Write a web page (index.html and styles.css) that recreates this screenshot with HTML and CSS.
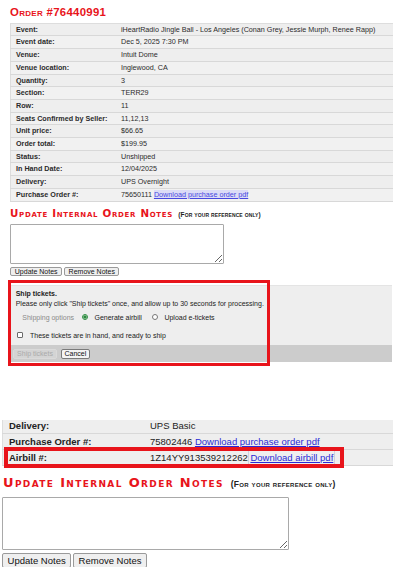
FILE: index.html
```html
<!DOCTYPE html>
<html lang="en">
<head>
    <meta charset="UTF-8">
    <meta name="viewport" content="width=device-width, initial-scale=1.0">
    <title>Order #76440991</title>
    <link rel="stylesheet" href="styles.css">
</head>
<body>
    <!-- zoomed-out view of the order page -->
    <section class="shot shot-small">
        <h2 class="order-title">Order #76440991</h2>
        <table class="details">
            <tbody>
                <tr><td class="label">Event:</td><td>iHeartRadio Jingle Ball - Los Angeles (Conan Grey, Jessie Murph, Renee Rapp)</td></tr>
                <tr><td class="label">Event date:</td><td>Dec 5, 2025 7:30 PM</td></tr>
                <tr><td class="label">Venue:</td><td>Intuit Dome</td></tr>
                <tr><td class="label">Venue location:</td><td>Inglewood, CA</td></tr>
                <tr><td class="label">Quantity:</td><td>3</td></tr>
                <tr><td class="label">Section:</td><td>TERR29</td></tr>
                <tr><td class="label">Row:</td><td>11</td></tr>
                <tr><td class="label">Seats Confirmed by Seller:</td><td>11,12,13</td></tr>
                <tr><td class="label">Unit price:</td><td>$66.65</td></tr>
                <tr><td class="label">Order total:</td><td>$199.95</td></tr>
                <tr><td class="label">Status:</td><td>Unshipped</td></tr>
                <tr><td class="label">In Hand Date:</td><td>12/04/2025</td></tr>
                <tr><td class="label">Delivery:</td><td>UPS Overnight</td></tr>
                <tr><td class="label">Purchase Order #:</td><td>75650111 <a class="visited" href="#">Download purchase order pdf</a></td></tr>
            </tbody>
        </table>

        <h3 class="notes-title">Update Internal Order Notes <small>(For your reference only)</small></h3>
        <textarea class="notes"></textarea>
        <div class="notes-actions">
            <button type="button">Update Notes</button>
            <button type="button">Remove Notes</button>
        </div>

        <div class="ship-wrap">
            <div class="ship-panel">
                <div class="ship-body">
                    <div class="ship-head">Ship tickets.</div>
                    <div class="ship-text">Please only click "Ship tickets" once, and allow up to 30 seconds for processing.</div>
                    <div class="ship-options">
                        <span class="opt-label">Shipping options</span>
                        <label class="opt"><input type="radio" name="ship" checked> Generate airbill</label>
                        <label class="opt"><input type="radio" name="ship"> Upload e-tickets</label>
                    </div>
                    <label class="ship-check"><input type="checkbox"> These tickets are in hand, and ready to ship</label>
                </div>
                <div class="ship-bar">
                    <button type="button" disabled>Ship tickets</button>
                    <button type="button">Cancel</button>
                </div>
            </div>
            <div class="callout callout-ship"></div>
        </div>
    </section>

    <!-- full size view after shipping -->
    <section class="shot shot-large">
        <div class="crop">
            <table class="details details-large">
                <tbody>
                    <tr><td class="label">Delivery:</td><td>UPS Basic</td></tr>
                    <tr><td class="label">Purchase Order #:</td><td>75802446 <a href="#">Download purchase order pdf</a></td></tr>
                    <tr><td class="label">Airbill #:</td><td>1Z14YY913539212262 <a class="focused" href="#">Download airbill pdf</a></td></tr>
                </tbody>
            </table>
            <div class="callout callout-airbill"></div>
        </div>

        <h3 class="notes-title">Update Internal Order Notes <small>(For your reference only)</small></h3>
        <textarea class="notes"></textarea>
        <div class="notes-actions">
            <button type="button">Update Notes</button>
            <button type="button">Remove Notes</button>
        </div>
    </section>
</body>
</html>
```

FILE: styles.css
```css
body {
    margin: 0;
    font-family: "Liberation Sans", Arial, sans-serif;
    color: #333;
    background: #fff;
    overflow: hidden;
}

a {
    color: #2a2ad6;
    text-decoration: underline;
}

.order-title {
    margin: 0;
    padding: 4.6px 0 0 10px;
    height: 14px;
    font-size: 11.4px;
    line-height: 14px;
    letter-spacing: 0.3px;
    font-variant: small-caps;
    font-weight: bold;
    color: #e8141b;
}

/* order details table */
.details {
    border-collapse: collapse;
    background: #eee;
}

.details td {
    padding: 0;
    border-bottom: 1px solid #d8d8d8;
    white-space: nowrap;
    vertical-align: middle;
}

.details tr:nth-child(even) td {
    background: #f1f1f1;
}

.details td.label {
    font-weight: bold;
}

.shot-small .details {
    margin: 4.1px 0 0 10px;
    width: 383px;
    border-top: 1px solid #ddd;
    border-left: 1px solid #ddd;
    font-size: 7.2px;
    color: #2b2b2b;
}

.shot-small .details td {
    height: 11.7px;
    line-height: 11.7px;
    padding-left: 5px;
}

.shot-small .details td.label {
    width: 100px;
}

.details a.visited {
    color: #4848e0;
    background: #dcdcf6;
}

/* notes */
.notes-title {
    margin: 0;
    font-family: "DejaVu Sans", "Liberation Sans", sans-serif;
    font-weight: bold;
    font-variant: small-caps;
    color: #e8141b;
    white-space: nowrap;
}

.notes-title small {
    font-family: "Liberation Sans", Arial, sans-serif;
    color: #222;
    font-weight: bold;
}

.notes {
    display: block;
    box-sizing: border-box;
    margin: 0;
    padding: 2px;
    border: 1px solid #a9a9a9;
    border-radius: 1px;
    background: #fff;
    resize: both;
}

.notes-actions {
    display: flex;
}

.notes-actions button,
.ship-bar button {
    box-sizing: border-box;
    margin: 0;
    font-family: "Liberation Sans", Arial, sans-serif;
    color: #111;
    background: #efefef;
    border: 1px solid #9a9a9a;
    border-radius: 2px;
    line-height: 1;
}

.shot-small .notes-title {
    margin: 5.1px 0 0 10px;
    height: 13px;
    font-size: 10.3px;
    line-height: 13px;
    letter-spacing: 0.7px;
}

.shot-small .notes-title small {
    margin-left: 1px;
    font-size: 6.5px;
    letter-spacing: 0.1px;
}

.shot-small .notes {
    margin: 4.7px 0 0 10.3px;
    width: 214px;
    height: 40px;
}

.shot-small .notes-actions {
    margin: 2.4px 0 0 10.3px;
    gap: 2px;
}

.shot-small .notes-actions button {
    height: 9px;
    padding: 0 3.5px;
    font-size: 7px;
}

/* ship tickets panel */
.ship-wrap {
    position: relative;
    margin: 9.3px 1px 0 10px;
}

.ship-panel {
    background: #eee;
    border-top: 1px solid #e4e4e4;
    font-size: 7px;
    color: #222;
}

.ship-body {
    padding: 3px 0 4px 5.7px;
}

.ship-head {
    font-weight: bold;
    line-height: 10px;
}

.ship-text {
    line-height: 10px;
}

.ship-options {
    display: flex;
    align-items: center;
    height: 12px;
    margin-top: 2px;
}

.opt-label {
    margin-left: 6.6px;
    color: #8a8a8a;
}

.opt {
    display: flex;
    align-items: center;
    margin-left: 7.8px;
}

.opt + .opt {
    margin-left: 9.9px;
}

.opt input {
    width: 6px;
    height: 6px;
    margin: 0 6.6px 0 0;
    accent-color: #2b8a3e;
}

.ship-check {
    display: flex;
    align-items: center;
    height: 12px;
    margin: 6px 0 0 1.6px;
}

.ship-check input {
    appearance: none;
    box-sizing: border-box;
    width: 6px;
    height: 6px;
    margin: 0 6.7px 0 0;
    border: 1px solid #6a6a6a;
    border-radius: 1px;
    background: #fff;
}

.ship-bar {
    display: flex;
    align-items: center;
    gap: 4px;
    height: 17px;
    padding-left: 3.3px;
    background: #ccc;
}

.ship-bar button {
    height: 10px;
    padding: 0 2.8px;
    font-size: 7px;
}

.ship-bar button:disabled {
    color: #aaa;
    background: #d4d4d4;
    border-color: #dadada;
}

.ship-bar button + button {
    background: #f4f4f4;
    border-color: #7a7a7a;
}

/* red highlight boxes */
.callout {
    position: absolute;
    box-sizing: border-box;
    border: 3px solid #e8141b;
    pointer-events: none;
}

.callout-ship {
    left: -2px;
    top: -5px;
    width: 262px;
    height: 86px;
}

/* full size view */
.shot-large {
    margin-top: 58px;
}

.crop {
    position: relative;
    height: 49px;
    overflow: hidden;
}

.details-large {
    margin: -2.5px 0 0 2px;
    width: 391px;
    border-left: 1px solid #ddd;
    font-size: 9.5px;
    color: #222;
}

.details-large td {
    height: 15.2px;
    line-height: 15.2px;
    padding-left: 6px;
}

.details-large td.label {
    width: 135px;
}

.details-large tr:nth-child(even) td {
    background: #eee;
}

.details-large tr:last-child td {
    background: #efefef;
}

.details a.focused {
    outline: 1px solid #d0d0dc;
    outline-offset: 1px;
}

.callout-airbill {
    left: 4px;
    top: 27px;
    width: 340px;
    height: 21px;
    border-width: 4px;
}

.shot-large .notes-title {
    margin: 5.5px 0 0 3px;
    height: 16px;
    font-size: 13px;
    line-height: 16px;
    letter-spacing: 1.35px;
}

.shot-large .notes-title small {
    margin-left: 1px;
    font-size: 8.5px;
    letter-spacing: 0.3px;
}

.shot-large .notes {
    margin: 6.2px 0 0 2.3px;
    width: 287px;
    height: 53.6px;
}

.shot-large .notes-actions {
    margin: 3px 0 0 2.3px;
    gap: 2.3px;
}

.shot-large .notes-actions button {
    height: 14.4px;
    padding: 0 4.3px;
    font-size: 9.5px;
}
```
